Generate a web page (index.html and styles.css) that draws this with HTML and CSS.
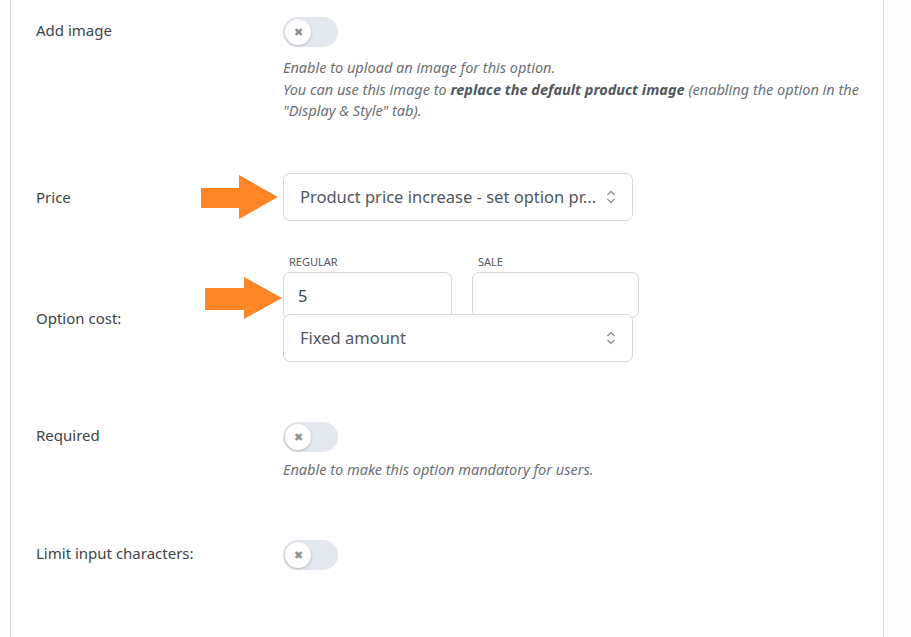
FILE: index.html
```html
<!DOCTYPE html>
<html lang="en">
<head>
    <meta charset="UTF-8">
    <meta name="viewport" content="width=device-width, initial-scale=1.0">
    <title>Option settings</title>
    <link rel="stylesheet" href="styles.css">
</head>
<body>
    <div class="panel">
        <!-- Add image -->
        <div class="row row-top">
            <div class="label">Add image</div>
            <div class="field">
                <span class="toggle"><span class="knob">&#x2716;</span></span>
                <p class="desc">Enable to upload an image for this option.<br>You can use this image to <b>replace the default product image</b> (enabling the option in the "Display &amp; Style" tab).</p>
            </div>
        </div>

        <!-- Price -->
        <div class="row row-price">
            <div class="label">Price</div>
            <div class="field">
                <svg class="arrow arrow-price" width="78" height="44" viewBox="0 0 78 44"><polygon points="0,13 38,13 38,0 77,22 38,44 38,33 0,33" fill="#ff8527"/></svg>
                <div class="select select-wide">
                    <span>Product price increase - set option pr...</span>
                    <svg class="chev" width="10" height="16" viewBox="0 0 10 16"><path d="M1.5 6 5 2.5 8.5 6M1.5 10 5 13.5 8.5 10" fill="none" stroke="#8c8f94" stroke-width="1.3"/></svg>
                </div>
            </div>
        </div>

        <!-- Option cost -->
        <div class="row row-cost">
            <div class="label">Option cost:</div>
            <div class="field">
                <svg class="arrow arrow-cost" width="78" height="42" viewBox="0 0 78 42"><polygon points="0,11 39,11 39,0 77,21 39,42 39,33 0,33" fill="#ff8527"/></svg>
                <div class="cost-inputs">
                    <div class="cost-col">
                        <div class="mini-label">REGULAR</div>
                        <div class="input input-regular">5</div>
                    </div>
                    <div class="cost-col">
                        <div class="mini-label">SALE</div>
                        <div class="input input-sale"></div>
                    </div>
                </div>
                <div class="select select-wide select-overlap">
                    <span>Fixed amount</span>
                    <svg class="chev" width="10" height="16" viewBox="0 0 10 16"><path d="M1.5 6 5 2.5 8.5 6M1.5 10 5 13.5 8.5 10" fill="none" stroke="#8c8f94" stroke-width="1.3"/></svg>
                </div>
            </div>
        </div>

        <!-- Required -->
        <div class="row row-top row-required">
            <div class="label">Required</div>
            <div class="field">
                <span class="toggle"><span class="knob">&#x2716;</span></span>
                <p class="desc">Enable to make this option mandatory for users.</p>
            </div>
        </div>

        <!-- Limit -->
        <div class="row row-top row-limit">
            <div class="label">Limit input characters:</div>
            <div class="field">
                <span class="toggle"><span class="knob">&#x2716;</span></span>
            </div>
        </div>
    </div>
</body>
</html>
```

FILE: styles.css
```css
body {
    margin: 0;
    padding: 0;
    background-color: #fdfdfd;
    font-family: "Noto Sans", "Open Sans", sans-serif;
    color: #3c434a;
}

.panel {
    margin-left: 10px;
    width: 874px;
    min-height: 637px;
    box-sizing: border-box;
    background-color: #fff;
    border-left: 1px solid #dcdcde;
    border-right: 1px solid #dcdcde;
    padding-top: 17px;
}

.row {
    display: grid;
    grid-template-columns: 272px 1fr;
    align-items: center;
}

.row-top {
    align-items: start;
}

.label {
    padding-left: 25px;
    font-size: 15px;
    line-height: 20px;
    color: #3c434a;
}

.row-top .label {
    padding-top: 3px;
}

.field {
    position: relative;
}

/* toggle */
.toggle {
    display: block;
    width: 55px;
    height: 30px;
    border-radius: 15px;
    background-color: #e3e7ee;
    position: relative;
}

.knob {
    position: absolute;
    left: 2px;
    top: 2px;
    width: 26px;
    height: 26px;
    border-radius: 50%;
    background-color: #fff;
    box-shadow: 0 1px 3px rgba(0, 0, 0, 0.22);
    color: #8c8f94;
    font-size: 11px;
    line-height: 26px;
    text-align: center;
}

.desc {
    margin: 10px 0 0;
    font-size: 14.5px;
    line-height: 21.5px;
    font-style: italic;
    color: #6b6f76;
    padding-right: 20px;
}

.desc b {
    font-weight: bold;
    color: #50575e;
}

/* selects and inputs */
.row-price {
    margin-top: 51px;
}

.select {
    display: flex;
    align-items: center;
    justify-content: space-between;
    box-sizing: border-box;
    height: 48px;
    padding: 0 16px 0 16px;
    border: 1px solid #d4d6dc;
    border-radius: 7px;
    background-color: #fff;
    font-size: 16.5px;
    color: #50575e;
    position: relative;
}

.select-wide {
    width: 350px;
}

.chev {
    display: block;
}

.row-cost {
    margin-top: 34px;
}

.row-cost .label {
    padding-top: 20px;
}

.cost-inputs {
    display: flex;
    gap: 20px;
}

.mini-label {
    font-size: 11px;
    line-height: 14px;
    color: #50575e;
    padding-left: 6px;
    margin-bottom: 3px;
}

.input {
    box-sizing: border-box;
    height: 48px;
    border: 1px solid #d4d6dc;
    border-radius: 7px;
    background-color: #fff;
    padding: 0 14px;
    font-size: 16.5px;
    line-height: 46px;
    color: #3c434a;
}

.input-regular {
    width: 169px;
}

.input-sale {
    width: 167px;
    height: 46px;
}

.select-overlap {
    margin-top: -6px;
}

.row-required {
    margin-top: 60px;
}

.row-required .desc {
    margin-top: 7px;
}

.row-limit {
    margin-top: 60px;
}

/* annotation arrows */
.arrow {
    position: absolute;
}

.arrow-price {
    left: -82px;
    top: 2px;
}

.arrow-cost {
    left: -78px;
    top: 22px;
}
```
